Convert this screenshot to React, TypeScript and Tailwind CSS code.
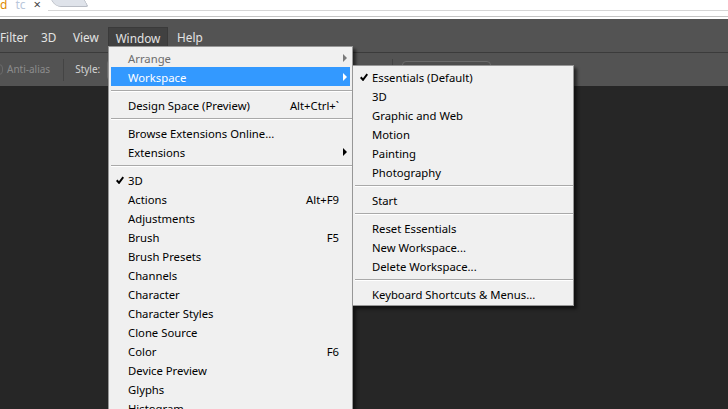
import React from 'react';

type Item =
  | 'sep'
  | {
      label: string;
      shortcut?: string;
      sub?: boolean;
      check?: boolean;
      disabled?: boolean;
      active?: boolean;
    };

const windowItems: Item[] = [
  { label: 'Arrange', sub: true, disabled: true },
  { label: 'Workspace', sub: true, active: true },
  'sep',
  { label: 'Design Space (Preview)', shortcut: 'Alt+Ctrl+`' },
  'sep',
  { label: 'Browse Extensions Online...' },
  { label: 'Extensions', sub: true },
  'sep',
  { label: '3D', check: true },
  { label: 'Actions', shortcut: 'Alt+F9' },
  { label: 'Adjustments' },
  { label: 'Brush', shortcut: 'F5' },
  { label: 'Brush Presets' },
  { label: 'Channels' },
  { label: 'Character' },
  { label: 'Character Styles' },
  { label: 'Clone Source' },
  { label: 'Color', shortcut: 'F6' },
  { label: 'Device Preview' },
  { label: 'Glyphs' },
  { label: 'Histogram' },
  { label: 'History' },
];

const workspaceItems: Item[] = [
  { label: 'Essentials (Default)', check: true },
  { label: '3D' },
  { label: 'Graphic and Web' },
  { label: 'Motion' },
  { label: 'Painting' },
  { label: 'Photography' },
  'sep',
  { label: 'Start' },
  'sep',
  { label: 'Reset Essentials' },
  { label: 'New Workspace...' },
  { label: 'Delete Workspace...' },
  'sep',
  { label: 'Keyboard Shortcuts & Menus...' },
];

const font = { fontFamily: '"Noto Sans", "Open Sans", sans-serif' };

function Check() {
  return (
    <svg width="8" height="8" viewBox="0 0 8 8" className="block">
      <path d="M0.7 4.3 L3 6.8 L7.3 1.1" fill="none" stroke="#000" strokeWidth="2" />
    </svg>
  );
}

function Arrow({ color }: { color: string }) {
  return (
    <svg width="4" height="8" viewBox="0 0 4 8" className="block">
      <path d="M0 0 L4 4 L0 8 Z" fill={color} />
    </svg>
  );
}

function MenuList({ items }: { items: Item[] }) {
  return (
    <>
      {items.map((item, i) =>
        item === 'sep' ? (
          <div key={i} className="h-[9px] flex flex-col justify-center pl-[2px]">
            <div className="h-px bg-[#a9a9a9]" />
            <div className="h-px bg-white" />
          </div>
        ) : (
          <div
            key={i}
            className={`h-[19px] mx-[2px] flex items-center text-[11.3px] leading-none ${
              item.active ? 'bg-[#3399ff] text-white' : item.disabled ? 'text-[#6d6d6d]' : 'text-black'
            }`}
          >
            <div className="w-[17px] flex justify-end pr-[4px] pt-px">{item.check && <Check />}</div>
            <span className="flex-1 whitespace-nowrap pt-[2px]">{item.label}</span>
            {item.shortcut && <span className="pr-[11px] whitespace-nowrap pt-[2px]">{item.shortcut}</span>}
            {item.sub && (
              <div className="pr-[3px]">
                <Arrow color={item.active ? '#ffffff' : item.disabled ? '#7a7a7a' : '#000000'} />
              </div>
            )}
          </div>
        )
      )}
    </>
  );
}

export default function App() {
  return (
    <div className="relative w-[728px] h-[409px] overflow-hidden bg-[#262626] flex flex-col" style={font}>
      {/* browser strip */}
      <div className="h-[19px] bg-white flex flex-col shrink-0">
        <div className="h-[10px] flex items-end">
          <span className="text-[12px] leading-none text-[#e08a00] -mb-[1px]">d</span>
          <span className="ml-[8px] text-[12px] leading-none text-[#b9c7db] -mb-[1px]">tc</span>
          <span className="ml-[8px] text-[13px] leading-none text-[#444] -mb-[1px]">×</span>
          <div className="ml-[12px] self-start w-[34px] h-[7px] bg-[#dfe3ea] border border-t-0 border-[#b8bcc4] rounded-bl-[6px] rounded-br-[3px] skew-x-[30deg]" />
        </div>
        <div className="h-px bg-[#d6d6d6] ml-[48px]" />
        <div className="h-[5px]" />
        <div className="h-px bg-[#c4c4c4]" />
        <div className="h-[2px]" />
      </div>

      {/* menu bar */}
      <div className="h-[33px] bg-[#535353] flex items-start text-[11.8px] text-[#e3e3e3] shrink-0">
        <span className="w-[41px] mt-[10px]">Filter</span>
        <span className="w-[32px] mt-[10px]">3D</span>
        <span className="w-[35px] mt-[10px]">View</span>
        <div className="w-[60px] h-[19px] mt-[8px] bg-[#414141] border border-b-0 border-[#3a3a3a] flex items-center justify-center pt-[3px]">
          Window
        </div>
        <span className="ml-[9px] mt-[10px]">Help</span>
      </div>
      <div className="h-px bg-[#3b3b3b] shrink-0" />

      {/* options bar */}
      <div className="h-[33px] bg-[#535353] flex items-center text-[10px] shrink-0">
        <div className="-ml-[8px] w-[11px] h-[11px] border border-[#6a6a6a] rounded-sm" />
        <span className="ml-[4px] text-[#8c8c8c]">Anti-alias</span>
        <div className="ml-[13px] w-px h-[22px] bg-[#444]" />
        <span className="ml-[11px] text-[#d4d4d4]">Style:</span>
        <div className="ml-[7px] w-[60px] h-[22px] border border-[#6b6b6b] rounded-sm bg-[#4d4d4d]" />
        <div className="ml-[225px] w-px h-[22px] bg-[#444]" />
        <div className="ml-[9px] w-[89px] h-[22px] self-end mb-[3px] border border-[#6b6b6b] rounded-sm bg-[#4d4d4d]" />
      </div>

      {/* canvas */}
      <div className="flex-1 bg-[#262626]" />

      {/* Window menu */}
      <div className="absolute left-[108px] top-[46px] w-[245px] h-[380px] bg-[#f0f0f0] border border-[#979797] pt-[1px] shadow-[3px_3px_3px_rgba(0,0,0,0.55)]">
        <MenuList items={windowItems} />
      </div>

      {/* Workspace submenu */}
      <div className="absolute left-[352px] top-[65px] w-[222px] bg-[#f0f0f0] border border-[#979797] pt-[1px] pb-[2px] shadow-[3px_3px_3px_rgba(0,0,0,0.55)]">
        <MenuList items={workspaceItems} />
      </div>
    </div>
  );
}
